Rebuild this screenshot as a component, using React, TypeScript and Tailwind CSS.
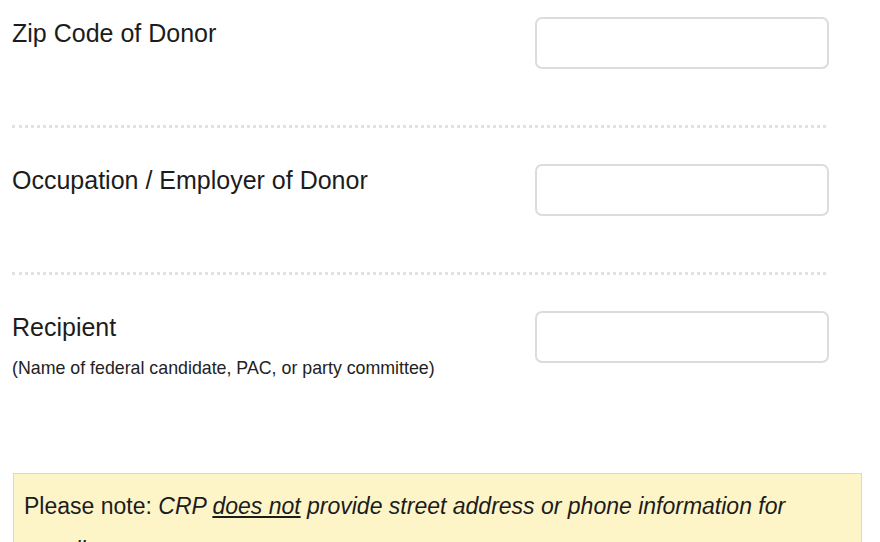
const fields = [
  { label: "Zip Code of Donor" },
  { label: "Occupation / Employer of Donor" },
  { label: "Recipient", hint: "(Name of federal candidate, PAC, or party committee)" },
];

function FieldRow({ label, hint }: { label: string; hint?: string }) {
  return (
    <div className="flex items-start">
      <div className="w-[523px] pt-[2px]">
        <div className="text-[25px] leading-[29px] text-[#1c1c1c]">{label}</div>
        {hint && <div className="mt-[16px] text-[17.8px] leading-[20px] text-[#222]">{hint}</div>}
      </div>
      <input
        type="text"
        className="h-[52px] w-[294px] rounded-[7px] border-2 border-[#dcdcdc] bg-white outline-none"
      />
    </div>
  );
}

export default function App() {
  return (
    <div className="h-screen bg-white font-['Liberation_Sans',Arial,sans-serif] overflow-hidden">
      <div className="pl-[12px] pt-[17px]">
        {fields.map((f, i) => (
          <div key={f.label}>
            <FieldRow label={f.label} hint={f.hint} />
            {i < fields.length - 1 && (
              <div className="mt-[56px] mb-[36px] w-[814px] border-t-[3px] border-dotted border-[#e2e2e2]" />
            )}
          </div>
        ))}
      </div>
      <div className="mx-[13px] mt-[95px] w-[849px] border border-[#eadc93] bg-[#fdf5c8] px-[10px] pt-[10px] text-[23px] leading-[44px] text-[#1c1c1c]">
        <p>
          Please note: <span className="italic">CRP <span className="underline">does not</span> provide street address or phone information for contributors.</span>
        </p>
      </div>
    </div>
  );
}
